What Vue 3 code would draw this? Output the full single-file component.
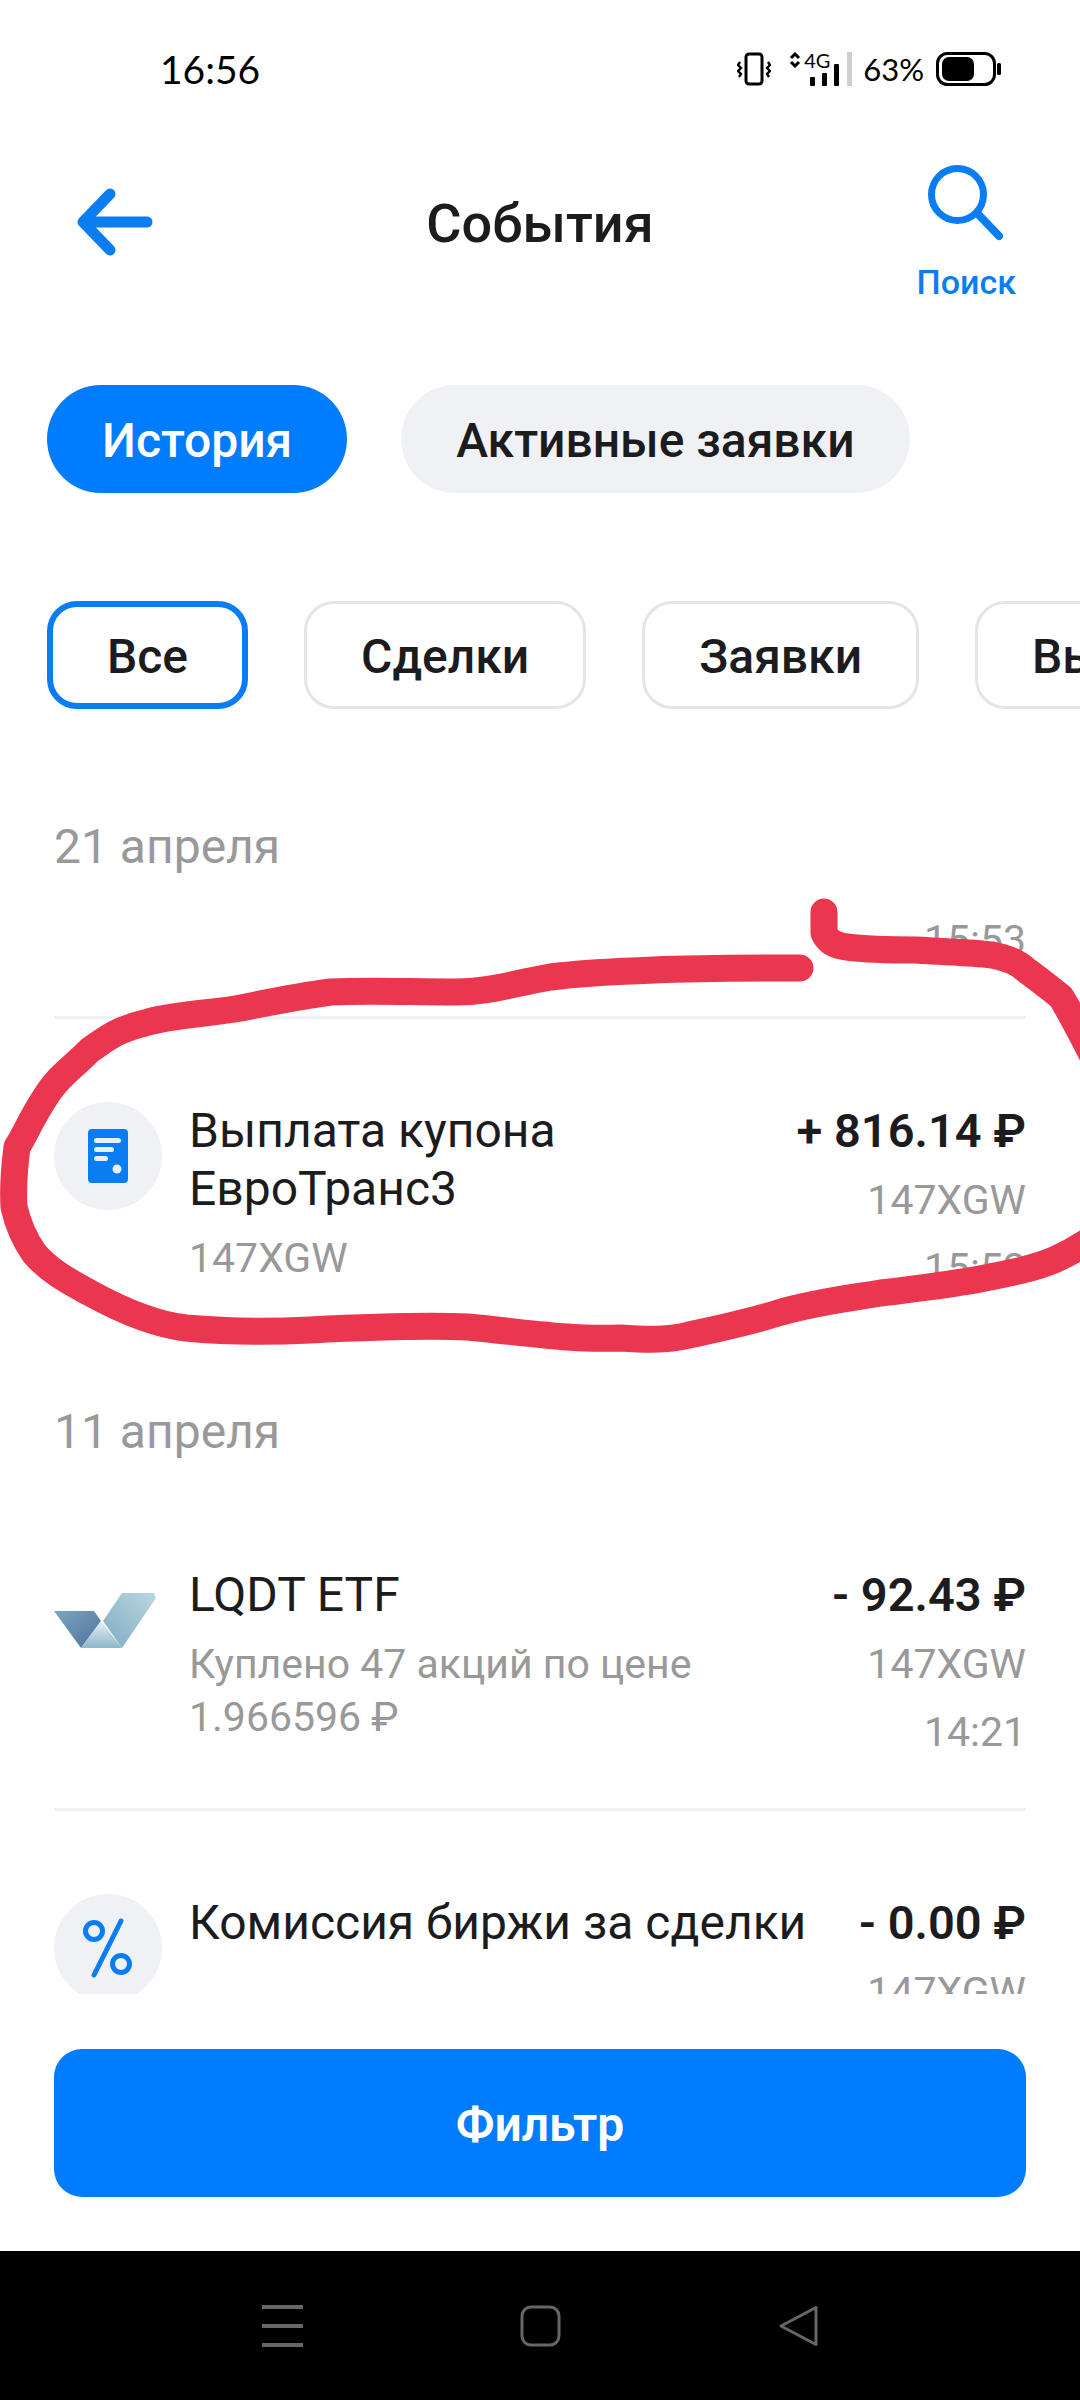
<template>
  <div class="screen">
    <!-- status bar -->
    <div class="status">
      <span class="clock">16:56</span>
      <div class="status-right">
        <svg class="ic-vibrate" width="34" height="34" viewBox="0 0 34 34" fill="none" stroke="#000">
          <rect x="9" y="2" width="16" height="30" rx="3" stroke-width="3" />
          <path d="M3 10l-2 3 3 3-3 3 3 3-2 3M31 10l2 3-3 3 3 3-3 3 2 3" stroke-width="2.4" />
        </svg>
        <div class="net">
          <svg width="12" height="16" viewBox="0 0 12 16" fill="none" stroke="#000" stroke-width="3">
            <path d="M2 6l4-4 4 4M2 10l4 4 4-4" />
          </svg>
          <span class="net-label">4G</span>
          <div class="net-bars">
            <i class="bar bar-1"></i>
            <i class="bar bar-2"></i>
            <i class="bar bar-3"></i>
          </div>
        </div>
        <i class="status-sep"></i>
        <span class="percent">63%</span>
        <svg width="66" height="34" viewBox="0 0 66 34" fill="none">
          <rect x="1.5" y="1.5" width="57" height="31" rx="10" stroke="#000" stroke-width="3" />
          <rect x="6" y="5" width="32" height="24" rx="7" fill="#000" />
          <rect x="61" y="11" width="4" height="12" rx="1.5" fill="#000" />
        </svg>
      </div>
    </div>

    <!-- header -->
    <div class="header">
      <svg class="back" width="76" height="68" viewBox="0 0 76 68" fill="none" stroke="#0a7df2" stroke-width="11" stroke-linecap="round" stroke-linejoin="round">
        <path d="M33 6L6 34l27 28M8 34h62" />
      </svg>
      <h1 class="title">События</h1>
      <div class="search">
        <svg width="76" height="76" viewBox="0 0 76 76" fill="none" stroke="#0a7df2" stroke-width="7" stroke-linecap="round">
          <circle cx="29.5" cy="29.5" r="26" />
          <path d="M49 48l22 23" stroke-width="8" />
        </svg>
        <span class="search-label">Поиск</span>
      </div>
    </div>

    <div class="tabs">
      <div class="tab tab-active">История</div>
      <div class="tab">Активные заявки</div>
    </div>

    <div class="chips">
      <div v-for="(chip, i) in chips" :key="chip" class="chip" :class="{ 'chip-active': i === 0 }">{{ chip }}</div>
    </div>

    <!-- events list -->
    <div class="list">
      <div class="date">21 апреля</div>
      <div class="row row-stub">
        <div class="side">
          <div class="meta">15:53</div>
        </div>
      </div>

      <template v-for="group in groups" :key="group.date">
        <div v-if="group.date" class="date date-next">{{ group.date }}</div>
        <div v-for="item in group.items" :key="item.title" class="row" :class="item.rowClass">
          <div class="icon-slot">
            <div v-if="item.icon === 'doc'" class="icon-round">
              <svg width="40" height="54" viewBox="0 0 40 54">
                <rect width="40" height="54" rx="4" fill="#0a7df2" />
                <g fill="#e6f1fd">
                  <rect x="6" y="9" width="27" height="5" rx="2.5" />
                  <rect x="6" y="18" width="20" height="5" rx="2.5" />
                  <rect x="6" y="27" width="14" height="5" rx="2.5" />
                  <circle cx="29" cy="40" r="4.5" />
                </g>
              </svg>
            </div>
            <svg v-else-if="item.icon === 'etf'" class="logo" width="102" height="55" viewBox="0 0 102 55">
              <defs>
                <linearGradient id="etfDark" x1="0" y1="0" x2="1" y2="1">
                  <stop offset="0" stop-color="#7ba7bf" />
                  <stop offset="1" stop-color="#50709b" />
                </linearGradient>
                <linearGradient id="etfLight" x1="1" y1="0" x2="0" y2="1">
                  <stop offset="0" stop-color="#bcd7e1" />
                  <stop offset="1" stop-color="#7dabc1" />
                </linearGradient>
                <linearGradient id="etfMid" x1="0" y1="0" x2="0" y2="1">
                  <stop offset="0" stop-color="#e4f0f5" />
                  <stop offset="1" stop-color="#8db6ca" />
                </linearGradient>
              </defs>
              <path d="M0 18h40l7 10-20 27z" fill="url(#etfDark)" />
              <path d="M68 0h32l2 5-34 50-19-27z" fill="url(#etfLight)" />
              <path d="M47 28l21 27H27z" fill="url(#etfMid)" />
            </svg>
            <div v-else class="icon-round">
              <svg width="50" height="60" viewBox="0 0 50 60" fill="none" stroke="#0a7df2" stroke-width="5" stroke-linecap="round">
                <circle cx="11" cy="13" r="8.5" />
                <circle cx="38" cy="46" r="8.5" />
                <path d="M38 3L11 57" />
              </svg>
            </div>
          </div>
          <div class="body">
            <div class="name">{{ item.title }}</div>
            <div v-if="item.sub" class="meta body-meta">{{ item.sub }}</div>
          </div>
          <div class="side">
            <div class="amount">{{ item.amount }}</div>
            <div class="meta side-meta">147XGW</div>
            <div v-if="item.time" class="meta side-time">{{ item.time }}</div>
          </div>
        </div>
      </template>
    </div>

    <div class="filter-btn">Фильтр</div>

    <!-- android nav bar -->
    <div class="nav">
      <svg width="41" height="42" viewBox="0 0 41 42" fill="#666">
        <rect y="0" width="41" height="4" />
        <rect y="19" width="41" height="4" />
        <rect y="38" width="41" height="4" />
      </svg>
      <svg width="41" height="42" viewBox="0 0 41 42" fill="none" stroke="#666" stroke-width="3">
        <rect x="2" y="2" width="37" height="38" rx="9" />
      </svg>
      <svg width="41" height="42" viewBox="0 0 41 42" fill="none" stroke="#666" stroke-width="3" stroke-linejoin="round">
        <path d="M38 2.5V39.5L3 21z" />
      </svg>
    </div>

    <!-- marker scribble drawn over the screenshot -->
    <svg class="scribble" width="1080" height="2400" viewBox="0 0 1080 2400" fill="none" stroke="#ea364f" stroke-width="27" stroke-linecap="round" stroke-linejoin="round">
      <path d="M800 968C750 968 700 968 654 970C610 972 590 972 551 977C510 984 490 992 455 992C410 992 370 990 331 992C300 996 270 1002 241 1008C205 1014 170 1015 145 1023C115 1030 105 1040 90 1050C70 1070 60 1075 48 1093C30 1120 25 1135 17 1147C14 1170 13 1190 14 1207C18 1225 25 1240 34 1253C50 1272 70 1282 90 1293C130 1315 160 1325 186 1328C230 1332 270 1332 310 1330C370 1327 420 1325 468 1327C520 1332 570 1340 620 1338C650 1340 670 1340 689 1335C720 1328 750 1322 778 1313C815 1302 850 1298 881 1293C920 1288 950 1285 985 1278C1015 1272 1035 1268 1054 1260C1065 1255 1075 1250 1090 1240" />
      <path d="M824 912C824 920 824 926 824 933C828 942 836 946 847 947C870 950 895 950 916 950C945 952 970 952 992 955C1008 958 1018 962 1026 970C1040 980 1052 990 1061 997C1072 1015 1082 1035 1095 1060" />
    </svg>
  </div>
</template>

<script setup>
const chips = ['Все', 'Сделки', 'Заявки', 'Выплаты']

const groups = [
  {
    date: null,
    items: [
      {
        icon: 'doc',
        title: 'Выплата купона\nЕвроТранс3',
        sub: '147XGW',
        amount: '+ 816.14 ₽',
        time: '15:52',
        rowClass: 'row-plain'
      }
    ]
  },
  {
    date: '11 апреля',
    items: [
      {
        icon: 'etf',
        title: 'LQDT ETF',
        sub: 'Куплено 47 акций по цене\n1.966596 ₽',
        amount: '- 92.43 ₽',
        time: '14:21'
      },
      {
        icon: 'percent',
        title: 'Комиссия биржи за сделки',
        amount: '- 0.00 ₽',
        time: '14:21'
      }
    ]
  }
]
</script>

<style>
html,
body {
  margin: 0;
  background: #fff;
}
</style>

<style scoped>
.screen {
  position: relative;
  display: flex;
  flex-direction: column;
  width: 1080px;
  height: 2400px;
  overflow: hidden;
  background: #fff;
  color: #1c1c1e;
  font-family: Roboto, "Noto Sans", sans-serif;
}

.status {
  display: flex;
  align-items: center;
  justify-content: space-between;
  flex: none;
  height: 138px;
  padding: 0 78px 0 160px;
  box-sizing: border-box;
  color: #000;
  font-family: Lato, sans-serif;
  font-weight: 400;
}

.clock {
  font-size: 39px;
}

.status-right {
  display: flex;
  align-items: center;
}

.ic-vibrate {
  margin-right: 18px;
}

.net {
  display: grid;
  grid-template-columns: 12px auto;
  column-gap: 3px;
  align-items: start;
  width: 52px;
  height: 34px;
  position: relative;
}

.net-label {
  font-size: 20px;
  line-height: 17px;
  font-weight: 400;
}

.net-bars {
  position: absolute;
  left: 21px;
  bottom: 0;
  display: flex;
  align-items: flex-end;
  gap: 7px;
}

.bar {
  display: block;
  width: 5px;
  background: #000;
  border-radius: 1px;
}

.bar-1 {
  height: 9px;
}

.bar-2 {
  height: 13px;
}

.bar-3 {
  height: 22px;
}

.status-sep {
  display: block;
  width: 5px;
  height: 34px;
  margin: 0 11px 0 6px;
  background: #cfcfcf;
}

.percent {
  margin-right: 12px;
  font-size: 31px;
}

.header {
  display: grid;
  grid-template-columns: 1fr auto 1fr;
  align-items: start;
  flex: none;
  height: 247px;
  padding: 27px 64px 0;
  box-sizing: border-box;
}

.back {
  margin: 23px 0 0 13px;
}

.title {
  margin: 0;
  padding-top: 30px;
  font-size: 54px;
  line-height: 58px;
  font-weight: 500;
}

.search {
  display: flex;
  flex-direction: column;
  align-items: center;
  justify-self: end;
}

.search-label {
  margin-top: 21px;
  color: #0a7df2;
  font-size: 34px;
  line-height: 40px;
  font-weight: 500;
}

.tabs {
  display: flex;
  gap: 54px;
  flex: none;
  padding-left: 47px;
}

.tab {
  height: 108px;
  padding: 0 55px;
  border-radius: 54px;
  background: #f0f1f4;
  font-size: 48px;
  line-height: 112px;
  font-weight: 500;
}

.tab-active {
  background: #007dff;
  color: #fff;
}

.chips {
  display: flex;
  gap: 56px;
  flex: none;
  margin-top: 108px;
  padding-left: 47px;
}

.chip {
  flex: none;
  height: 108px;
  min-width: 115px;
  padding: 0 54px;
  box-sizing: border-box;
  border: 3px solid #e4e5e7;
  border-radius: 30px;
  font-size: 48px;
  line-height: 106px;
  font-weight: 500;
}

.chip-active {
  border: 6px solid #0a7df2;
  line-height: 100px;
}

.list {
  flex: none;
  height: 1285px;
  margin: 0 54px;
  overflow: hidden;
}

.date {
  margin-top: 108px;
  color: #999;
  font-size: 48px;
  line-height: 60px;
}

.date-next {
  margin-top: 58px;
  margin-bottom: 21px;
}

.row {
  display: flex;
  padding: 83px 0 50px;
  border-bottom: 3px solid #f0f1f3;
}

.row-stub {
  justify-content: flex-end;
  padding-top: 37px;
}

.row-plain,
.row:last-child {
  border-bottom: 0;
}

.icon-slot {
  display: flex;
  align-items: center;
  justify-content: flex-start;
  flex: none;
  width: 108px;
  height: 108px;
  margin-right: 29px;
}

.icon-round {
  display: flex;
  align-items: center;
  justify-content: center;
  width: 108px;
  height: 108px;
  border-radius: 50%;
  background: #f0f1f5;
}

.body {
  flex: 1;
  min-width: 0;
}

.name {
  margin-left: -2px;
  font-size: 48px;
  line-height: 58px;
  white-space: pre-line;
}

.meta {
  color: #999;
  font-size: 41px;
  line-height: 52px;
}

.body-meta {
  margin: 14px 0 0 -2px;
  line-height: 53px;
  white-space: pre-line;
}

.side {
  flex: none;
  text-align: right;
}

.amount {
  font-size: 47px;
  line-height: 58px;
  font-weight: 600;
}

.side-meta {
  margin-top: 14px;
}

.side-time {
  margin-top: 16px;
}

.filter-btn {
  flex: none;
  height: 148px;
  margin: 55px 54px 0;
  border-radius: 28px;
  background: #007dff;
  color: #fff;
  font-size: 48px;
  line-height: 152px;
  font-weight: 600;
  text-align: center;
}

.nav {
  display: flex;
  align-items: center;
  justify-content: center;
  gap: 217px;
  flex: none;
  height: 149px;
  margin-top: auto;
  background: #000;
}

.scribble {
  position: absolute;
  top: 0;
  left: 0;
  pointer-events: none;
}
</style>
